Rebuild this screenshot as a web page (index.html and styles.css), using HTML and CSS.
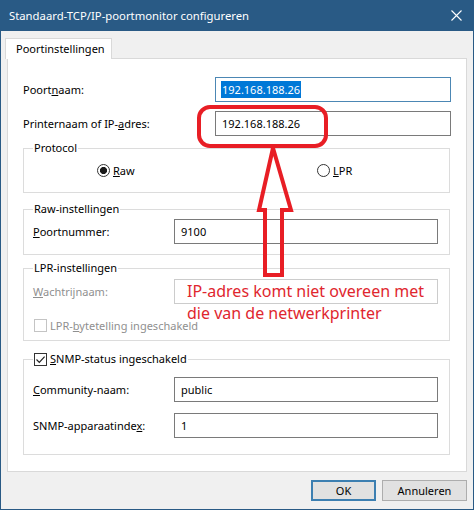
FILE: index.html
```html
<!DOCTYPE html>
<html lang="nl">
<head>
    <meta charset="UTF-8">
    <meta name="viewport" content="width=device-width, initial-scale=1.0">
    <title>Standaard-TCP/IP-poortmonitor configureren</title>
    <link rel="stylesheet" href="styles.css">
</head>
<body>
    <div class="window">
        <div class="titlebar">
            <span class="title">Standaard-TCP/IP-poortmonitor configureren</span>
            <svg class="close" width="11" height="11" viewBox="0 0 11 11">
                <path d="M0.5 0.5 L10.5 10.5 M10.5 0.5 L0.5 10.5" stroke="#fff" stroke-width="1.1" fill="none"/>
            </svg>
        </div>

        <div class="client">
            <div class="tabs">
                <div class="tab">Poortinstellingen</div>
            </div>

            <div class="panel">
                <div class="row">
                    <label>Poort<u>n</u>aam:</label>
                    <div class="field focused"><span class="selected">192.168.188.26</span></div>
                </div>
                <div class="row">
                    <label>Printernaam of IP-<u>a</u>dres:</label>
                    <div class="field">192.168.188.26</div>
                </div>

                <fieldset class="group protocol">
                    <legend>Protocol</legend>
                    <div class="radios">
                        <span class="option"><span class="radio on"></span><span><u>R</u>aw</span></span>
                        <span class="option"><span class="radio"></span><span><u>L</u>PR</span></span>
                    </div>
                </fieldset>

                <fieldset class="group raw">
                    <legend>Raw-instellingen</legend>
                    <div class="group-row">
                        <label><u>P</u>oortnummer:</label>
                        <div class="field">9100</div>
                    </div>
                </fieldset>

                <fieldset class="group lpr">
                    <legend>LPR-instellingen</legend>
                    <div class="group-row">
                        <label class="disabled"><u>W</u>achtrijnaam:</label>
                        <div class="field disabled"></div>
                    </div>
                    <div class="check-row disabled">
                        <span class="check"></span><span>LPR-<u>b</u>ytetelling ingeschakeld</span>
                    </div>
                </fieldset>

                <fieldset class="group snmp">
                    <legend>
                        <span class="check on">
                            <svg width="11" height="11" viewBox="0 0 11 11"><path d="M1.5 5.5 L4.3 8.3 L9.6 2.6" stroke="#222" stroke-width="1.2" fill="none"/></svg>
                        </span><span><u>S</u>NMP-status ingeschakeld</span>
                    </legend>
                    <div class="group-row">
                        <label><u>C</u>ommunity-naam:</label>
                        <div class="field">public</div>
                    </div>
                    <div class="group-row second">
                        <label>SNMP-apparaatinde<u>x</u>:</label>
                        <div class="field">1</div>
                    </div>
                </fieldset>
            </div>

            <div class="buttons">
                <button class="default">OK</button>
                <button>Annuleren</button>
            </div>
        </div>
    </div>

    <!-- red annotation drawn over the dialog -->
    <svg class="annot" width="474" height="510" viewBox="0 0 474 510">
        <rect x="199" y="107" width="127" height="39" rx="11" ry="11" fill="none" stroke="#e81e25" stroke-width="4"/>
        <polygon points="273,148 259,210 265,210 265,275 282,275 282,210 291,210" fill="none" stroke="#e81e25" stroke-width="4" stroke-linejoin="miter"/>
    </svg>
    <div class="note">IP-adres komt niet overeen met<br>die van de netwerkprinter</div>
</body>
</html>
```

FILE: styles.css
```css
html, body {
    margin: 0;
    padding: 0;
}
body {
    position: relative;
    width: 474px;
    height: 510px;
    font-family: "Noto Sans", "Open Sans", sans-serif;
    font-size: 11px;
    color: #000;
    overflow: hidden;
}
.window {
    width: 474px;
    height: 510px;
    box-sizing: border-box;
    border: 1px solid #295a85;
    border-top: 0;
    background: #f0f0f0;
    display: flex;
    flex-direction: column;
}
.titlebar {
    height: 31px;
    margin: 0 -1px;
    padding: 0 12px 0 9px;
    background: #295a85;
    color: #fff;
    display: flex;
    align-items: center;
    justify-content: space-between;
    font-size: 11.3px;
    flex-shrink: 0;
}
.close {
    display: block;
}
.client {
    flex: 1;
    padding: 7px 6px 0 6px;
}
.tabs {
    display: flex;
    height: 20px;
}
.tab {
    position: relative;
    z-index: 1;
    margin-left: -2px;
    height: 21px;
    box-sizing: border-box;
    padding: 0 6px 0 10px;
    line-height: 19px;
    background: #fff;
    border: 1px solid #d9d9d9;
    border-bottom: 0;
}
.panel {
    height: 414px;
    box-sizing: border-box;
    padding: 18px 15px 0 15px;
    background: #fff;
    border: 1px solid #d9d9d9;
}
.row {
    display: grid;
    grid-template-columns: 192px 236px;
    align-items: center;
    margin-bottom: 9px;
}
.row:nth-child(2) {
    margin-bottom: 0;
}
.field {
    height: 25px;
    box-sizing: border-box;
    border: 1px solid #7a7a7a;
    background: #fff;
    padding: 0 6px;
    line-height: 23px;
    white-space: nowrap;
}
.field.focused {
    border-color: #4c87b4;
    padding-left: 5px;
}
.field.disabled {
    border-color: #cccccc;
}
.selected {
    background: #0078d7;
    color: #fff;
    padding: 1px 1px;
}
.disabled {
    color: #8f8f8f;
}

/* group boxes */
.group {
    border: 1px solid #dcdcdc;
    margin: 0 1px 0 0;
    padding: 0 11px 10px 9px;
    min-width: 0;
}
.group legend {
    padding: 0 1px;
    height: 16px;
    line-height: 16px;
    display: flex;
    align-items: center;
}
.protocol {
    margin-top: 4px;
    padding-bottom: 14px;
}
.raw {
    margin-top: 8px;
}
.lpr {
    margin-top: 5px;
    padding-bottom: 7px;
}
.snmp {
    margin-top: 10px;
    padding-bottom: 16px;
}
.group-row {
    display: grid;
    grid-template-columns: 141px 264px;
    align-items: center;
    margin-top: 2px;
}
.lpr .group-row {
    margin-top: 3px;
}
.snmp .group-row {
    margin-top: 10px;
}
.snmp .group-row.second {
    margin-top: 11px;
}
.radios {
    display: grid;
    grid-template-columns: 220px auto;
    padding-left: 64px;
    margin-top: 6px;
    height: 16px;
    align-items: center;
}
.option {
    display: flex;
    align-items: center;
    gap: 3px;
}
.radio {
    width: 13px;
    height: 13px;
    box-sizing: border-box;
    border: 1px solid #333;
    border-radius: 50%;
    background: #fff;
}
.radio.on {
    background: radial-gradient(circle, #1a1a1a 3.2px, #fff 3.9px);
}
.check-row {
    display: flex;
    align-items: center;
    height: 16px;
    margin-top: 13px;
    margin-left: 1px;
    gap: 3px;
}
.check {
    width: 13px;
    height: 13px;
    box-sizing: border-box;
    border: 1px solid #333;
    background: #fff;
    display: inline-flex;
    align-items: center;
    justify-content: center;
    margin-right: 3px;
}
.check-row .check {
    border-color: #c4c4c4;
    margin-right: 0;
}
.check svg {
    display: block;
}

/* buttons */
.buttons {
    display: flex;
    justify-content: flex-end;
    gap: 6px;
    margin-top: 8px;
}
button {
    height: 21px;
    box-sizing: border-box;
    border: 1px solid #adadad;
    background: #e1e1e1;
    font-family: inherit;
    font-size: 11px;
    padding: 0;
    width: 85px;
    color: #000;
}
button.default {
    width: 65px;
    border: 2px solid #3c7fb1;
}

/* annotation */
.annot {
    position: absolute;
    left: 0;
    top: 0;
    pointer-events: none;
}
.note {
    position: absolute;
    left: 187px;
    top: 280px;
    font-family: "Noto Sans", sans-serif;
    font-size: 16px;
    line-height: 22px;
    color: #e0262e;
    white-space: nowrap;
}
```
